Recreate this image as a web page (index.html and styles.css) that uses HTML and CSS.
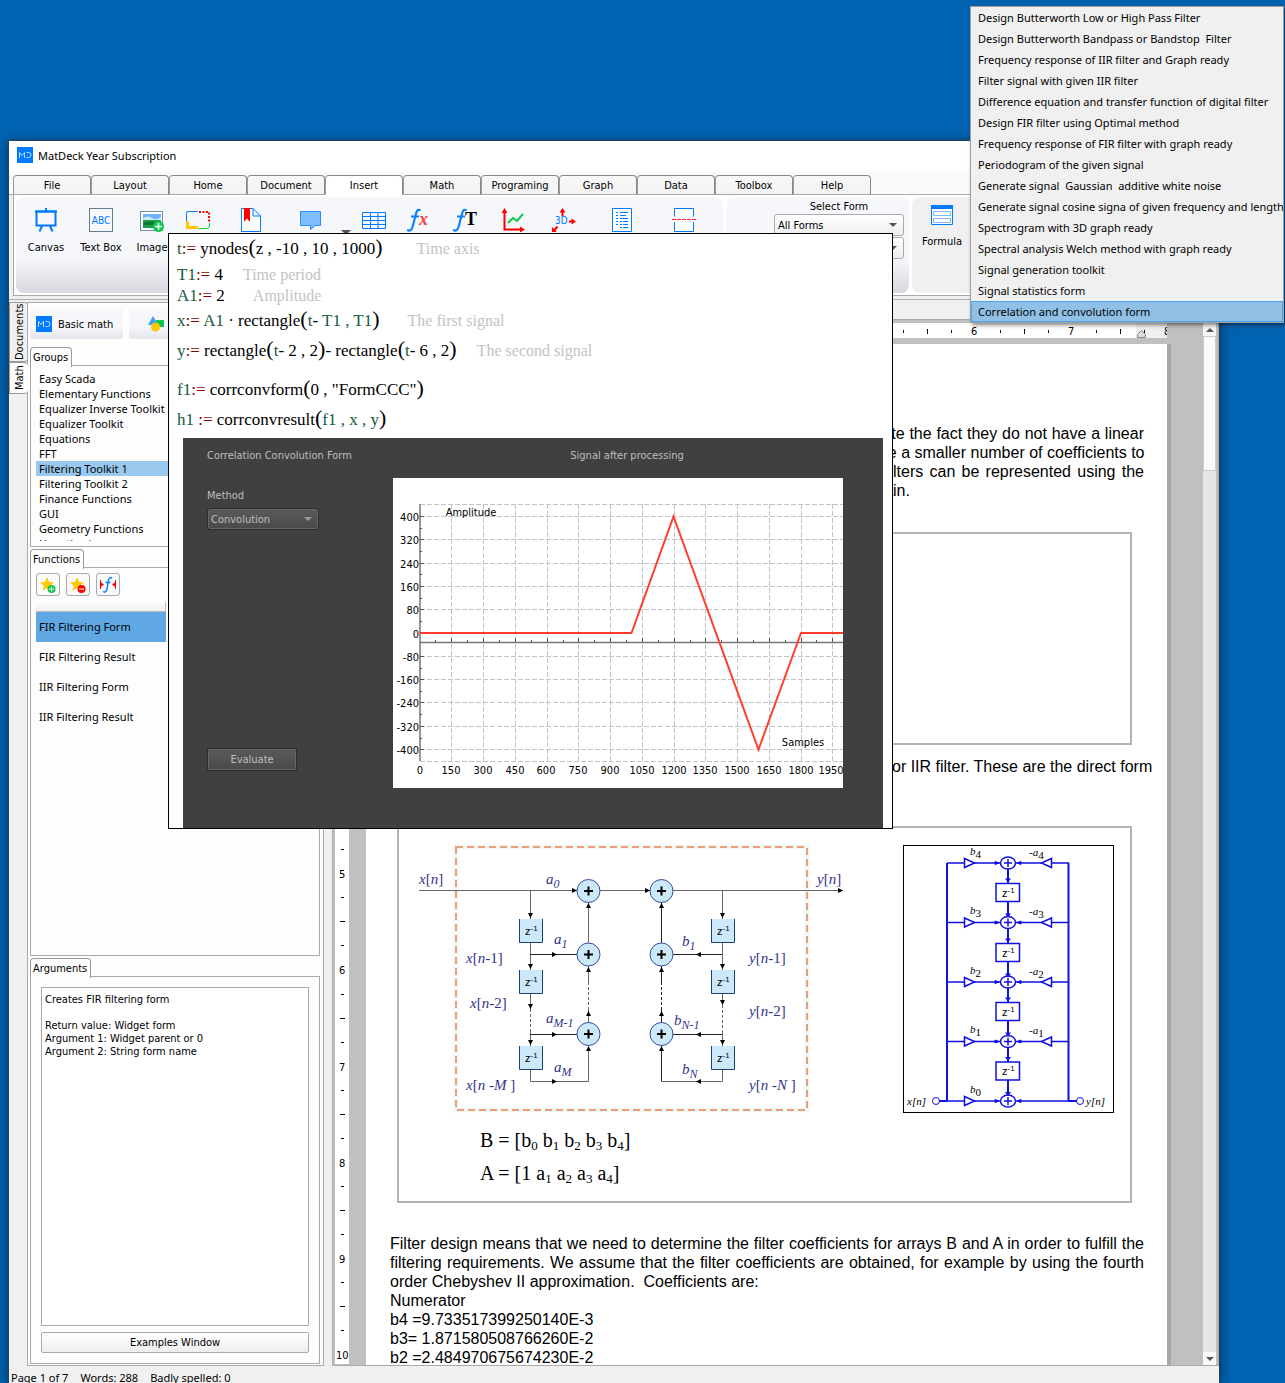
FILE: index.html
```html
<!DOCTYPE html>
<html lang="en">
<head>
<meta charset="utf-8">
<meta name="viewport" content="width=device-width, initial-scale=1">
<title>MatDeck Year Subscription</title>
<link rel="stylesheet" href="styles.css">
</head>
<body>
<main class="app">
  <header class="titlebar">
    <svg class="logo" viewBox="0 0 16 16"><rect width="16" height="16" fill="#007bff"/><path d="M2.500 11V5.500L5 8.500 7.500 5.500V11M9.500 5.500h2q2.500 0 2.500 2.500t-2.500 2.500h-2" fill="none" stroke="#bfe0ff"/></svg>
    <h1>MatDeck Year Subscription</h1>
  </header>

  <nav class="tabs">
    <button>File</button><button>Layout</button><button>Home</button><button>Document</button><button class="active">Insert</button><button>Math</button><button>Programing</button><button>Graph</button><button>Data</button><button>Toolbox</button><button>Help</button>
  </nav>

  <section class="ribbon">
    <div class="group tools">
      <button class="tool w54"><svg viewBox="0 0 24 24"><path d="M12 0v4M2.500 3.500h19v14h-19zM8 18l-2.500 5.500M16 18l2.500 5.500" fill="none" stroke="#007bff" stroke-width="2"/><path d="M1 3.500h22" stroke="#007bff" stroke-width="2"/></svg>Canvas</button>
      <button class="tool w56"><svg viewBox="0 0 24 24"><rect x=".5" y=".5" width="23" height="23" fill="none" stroke="#5f7f8f"/><text x="12" y="16" text-anchor="middle" class="abc" fill="#007bff">ABC</text></svg>Text Box</button>
      <button class="tool w46"><svg viewBox="0 0 24 24"><rect x=".5" y="3.500" width="22" height="19" fill="#fff" stroke="#6f8f9f"/><path d="M3 6h18v6H3z" fill="#6cb4ff"/><path d="M3 10q5-3 9 0t9-1v4H3z" fill="#cfe8ff"/><path d="M3 12h18v8H3z" fill="#1f9e4a"/><path d="M3 15q8-3 18 0v2H3z" fill="#0c7a34"/><circle cx="18.500" cy="18.500" r="5.500" fill="#0dc94f"/><path d="M18.500 15v7M15 18.500h7" stroke="#fff" stroke-width="1.500"/></svg>Image</button>
      <button class="tool w46" aria-label="Frame"><svg viewBox="0 0 24 24"><path d="M.5 13V5q0-1.500 1.500-1.500h10" fill="none" stroke="#007bff"/><path d="M13 4h10v11" fill="none" stroke="red" stroke-width="2" stroke-dasharray="2 1.500"/><path d="M23.500 15v3q0 2.500-3 2.500h-8" fill="none" stroke="#0dc94f"/><path d="M0 13h3v5h9v3H0z" fill="#ffc800"/></svg></button>
      <button class="tool w60" aria-label="Bookmark"><svg viewBox="0 0 24 24"><path d="M2.500.5h11.500l7.500 7.500v15.500h-19zM14 .5V8h7.500" fill="#fff" stroke="#007bff"/><path d="M5 0h6v14l-3-3.500L5 14z" fill="red"/></svg></button>
      <button class="tool w60" aria-label="Comment"><svg viewBox="0 0 24 24"><path d="M1.500 3.500h20v14H16l-4.500 4v-4h-10z" fill="#80bdff" stroke="#2a8cff"/></svg></button>
      <i class="caret"></i>
      <button class="tool w46" aria-label="Table"><svg viewBox="0 0 24 24"><path d="M.5 4.500h23v16H.5zM.5 8.500h23M.5 12.500h23M.5 16.500h23M8.500 4.500v16M16 4.500v16" fill="none" stroke="#007bff"/></svg></button>
      <button class="tool w44" aria-label="Function"><svg viewBox="0 0 24 24"><path d="M13.500 2.500Q11 .5 9.500 4L5.500 19Q4 24 0 22M4 8.500h8" fill="none" stroke="#0a82ff" stroke-width="2.200"/><text x="12" y="17" class="fx" fill="#ff3b3b" font-style="italic">x</text></svg></button>
      <button class="tool w48" aria-label="Text function"><svg viewBox="0 0 24 24"><path d="M13.500 2.500Q11 .5 9.500 4L5.500 19Q4 24 0 22M4 8.500h8" fill="none" stroke="#0a82ff" stroke-width="2.200"/><text x="12" y="17" class="fx">T</text></svg></button>
      <button class="tool w48" aria-label="Graph"><svg viewBox="0 0 24 24"><path d="M3.500 2v19.500H22" fill="none" stroke="red" stroke-width="2"/><path d="M.5 5l3-5 3 5zM19 18.500l5 3-5 3z" fill="red"/><path d="M7 15l5-5 4 3 6-7" fill="none" stroke="#0dc94f" stroke-width="2"/></svg></button>
      <button class="tool w54" aria-label="3D graph"><svg viewBox="0 0 24 24"><path d="M10.500 3v5M17 13.500h4M5.500 18.500L2.500 22" stroke="red" stroke-width="2"/><path d="M7.500 4.500l3-4.500 3 4.500zM19.500 10.500l4.500 3-4.500 3zM0 19v5h5z" fill="red"/><text x="3" y="16" class="abc" fill="#007bff">3D</text></svg></button>
      <button class="tool w62" aria-label="List"><svg viewBox="0 0 24 24"><path d="M2.500.5h19v23h-19z" fill="#fff" stroke="#007bff"/><path d="M6 4.500h2M10 4.500h8M6 7.500h2M10 7.500h6M6 10.500h2M10 10.500h8M10 13.500h2M13 13.500h5M10 16.500h2M13 16.500h5M10 19.500h2M13 19.500h5M6 13.500h2M6 16.500h2" stroke="#007bff"/></svg></button>
      <button class="tool w62" aria-label="Page break"><svg viewBox="0 0 24 24"><path d="M2.500 8.500v-8h19v8M2.500 14v9.500h19V14" fill="#fff" stroke="#007bff"/><path d="M0 11.500h24" stroke="#ff2020" stroke-dasharray="4 1"/></svg></button>
    </div>
    <div class="group forms">
      <svg class="form-icon" viewBox="0 0 22 20"><use href="#form"/></svg>
      <div class="form-fields">
        <label for="form">Select Form</label>
        <span class="pick"><select id="form"><option>All Forms</option></select></span>
        <span class="pick"><select aria-label="Form item"><option></option></select></span>
      </div>
    </div>
    <div class="group formula">
      <button class="tool w60"><svg class="form-icon" viewBox="0 0 22 20"><g id="form"><path d="M.5.5h21v19H.5z" fill="#fff" stroke="#007bff"/><path d="M0 0h22v4H0z" fill="#007bff"/><path d="M2.500 6.500h17v4h-17zM2.500 13.500h17v4h-17z" fill="#fff" stroke="#80b8ff"/></g></svg>Formula</button>
    </div>
  </section>

  <div class="workspace">
    <nav class="side-tabs"><button>Documents</button><button class="active">Math</button></nav>
    <aside class="side">
      <div class="kits">
        <button><svg class="logo" viewBox="0 0 16 16"><rect width="16" height="16" fill="#007bff"/><path d="M2.500 11V5.500L5 8.500 7.500 5.500V11M9.500 5.500h2q2.500 0 2.500 2.500t-2.500 2.500h-2" fill="none" stroke="#bfe0ff"/></svg>Basic math</button>
        <button class="shapes" aria-label="Shapes"><svg class="logo" viewBox="0 0 16 16"><path d="M8 4h8v7H8z" fill="#0dc94f"/><path d="M0 9l5-9 5 9z" fill="#3f9bff"/><circle cx="7.500" cy="11" r="4.500" fill="#ffc800"/></svg></button>
      </div>
      <section class="pane">
        <h2>Groups</h2>
        <div class="box groups">
          <ul>
            <li>Easy Scada</li><li>Elementary Functions</li><li>Equalizer Inverse Toolkit</li><li>Equalizer Toolkit</li><li>Equations</li><li>FFT</li><li class="selected">Filtering Toolkit 1</li><li>Filtering Toolkit 2</li><li>Finance Functions</li><li>GUI</li><li>Geometry Functions</li><li>Hypothesis</li>
          </ul>
        </div>
      </section>
      <section class="pane grow">
        <h2>Functions</h2>
        <div class="box functions">
          <div class="actions">
            <button aria-label="Add favourite"><svg viewBox="0 0 18 18"><path d="M8 1l2 5 5 .5-4 3.500 1.500 5L8 12l-4.500 3L5 10 1 6.500 6 6z" fill="#ffc800"/><circle cx="12.500" cy="13" r="4" fill="#0dc94f"/><path d="M12.500 10.500v5M10 13h5" stroke="#fff"/></svg></button>
            <button aria-label="Remove favourite"><svg viewBox="0 0 18 18"><path d="M8 1l2 5 5 .5-4 3.500 1.500 5L8 12l-4.500 3L5 10 1 6.500 6 6z" fill="#ffc800"/><circle cx="12.500" cy="13" r="4" fill="red"/><path d="M10 13h5" stroke="#fff"/></svg></button>
            <button aria-label="Insert function"><svg viewBox="0 0 18 18"><path d="M1.500 4v9M16.500 4v9" stroke="red"/><path d="M1 5.500L5 8.500 1 11.500zM17 5.500l-4 3 4 3z" fill="red"/><path d="M13 2.500Q11 0 9.500 4L8 13Q7 17.500 4 15.500M6.500 6.500h5" fill="none" stroke="#0a82ff" stroke-width="1.500"/></svg></button>
          </div>
          <div class="list-head"></div>
          <ul>
            <li class="selected">FIR Filtering Form</li><li>FIR Filtering Result</li><li>IIR Filtering Form</li><li>IIR Filtering Result</li>
          </ul>
        </div>
      </section>
      <section class="pane">
        <h2>Arguments</h2>
        <div class="box arguments">
          <div class="help"><p>Creates FIR filtering form</p><p>Return value: Widget form<br>Argument 1: Widget parent or 0<br>Argument 2: String form name</p></div>
          <button>Examples Window</button>
        </div>
      </section>
    </aside>
    <div class="splitter"></div>

    <section class="editor">
      <div class="editor-bar"></div>
      <div class="view">
        <div class="sheet-area">
          <svg class="ruler-top" viewBox="335 323 832 15"><path d="M335 323h832v15H335z" fill="#fff"/><path d="M1136 323h31v15h-31z" fill="#f0f0f0"/><path d="M903.500 330v3M951.500 330v3M1000.500 330v3M1048.500 330v3M1096.500 330v3M1144.500 330v3M927.500 329v5M1024.500 329v5M1120.500 329v5" stroke="#000"/><text x="971" y="335">6</text><text x="1068" y="335">7</text><text x="1164" y="335">8</text><path d="M1137.500 337.500v-3l4-4 4 4v3z" fill="#ddd" stroke="#888"/></svg>
          <div class="sheet-row">
            <svg class="ruler-left" viewBox="335 344 14 1020"><path d="M335 344h14v1020h-14z" fill="#fff"/><path d="M341 849.500h3M341 897.500h3M341 945.500h3M341 994.500h3M341 1042.500h3M341 1090.500h3M341 1138.500h3M341 1186.500h3M341 1234.500h3M341 1282.500h3M341 1330.500h3M340 921.500h5M340 1018.500h5M340 1114.500h5M340 1210.500h5M340 1306.500h5" stroke="#000"/><text x="339" y="878">5</text><text x="339" y="974">6</text><text x="339" y="1071">7</text><text x="339" y="1167">8</text><text x="339" y="1263">9</text><text x="336" y="1359">10</text></svg>
            <article class="sheet">
              <div class="intro">
                <p>despite the fact they do not have a linear</p>
                <p class="in-s">have a smaller number of coefficients to</p>
                <p class="in-l">filters can be represented using the</p>
                <p class="last">domain.</p>
              </div>
              <div class="frame empty"></div>
              <p class="forms-note">or IIR filter. These are the direct form</p>
              <div class="frame">
                <div class="figures">
                  <svg class="fig-a" viewBox="418 842 430 272">
                    <defs>
                      <g id="sum"><circle r="11.500" fill="#cbe9f9" stroke="#3a4a9c"/><path d="M-4.500 0h9M0-4.500v9" stroke="#000" stroke-width="2"/></g>
                      <g id="delay"><rect x="-12" width="24" height="24" fill="#cbe9f9"/><path d="M-11.500 0v23.500h23V0" fill="none" stroke="#1f3f6f"/><text x="-6" y="16">z<tspan class="tiny" dy="-4">-1</tspan></text></g>
                      <path id="ar" d="M0 0l-5-2.500v5z"/>
                    </defs>
                    <rect x="456" y="847" width="351" height="263" fill="none" stroke="#f1f8f4" stroke-width="5"/>
                    <rect x="456" y="847" width="351" height="263" fill="none" stroke="#e8a07a" stroke-width="2" stroke-dasharray="7 4"/>
                    <path d="M419 890.500h424M530.500 890v156M722.500 890v156M530.500 1070v11.500h58V966M588.500 954v-52M722.500 1070v11.500h-61V902" fill="none" stroke="#666"/>
                    <path d="M530 954.500h47M530 1034.500h47M673 954.500h49M673 1034.500h49M661.500 1081v-179" stroke="#222"/>
                    <path d="M530.500 1012v20M588.500 985v25M661.500 985v25M722.500 1008v22" stroke="#fff" stroke-width="2" stroke-dasharray="2 3"/>
                    <use href="#sum" x="588.500" y="891"/><use href="#sum" x="588.500" y="954.500"/><use href="#sum" x="588.500" y="1034"/>
                    <use href="#sum" x="661.500" y="891"/><use href="#sum" x="661.500" y="954.500"/><use href="#sum" x="661.500" y="1034"/>
                    <use href="#delay" x="531" y="919"/><use href="#delay" x="531" y="970"/><use href="#delay" x="531" y="1046"/>
                    <use href="#delay" x="723" y="919"/><use href="#delay" x="723" y="970"/><use href="#delay" x="723" y="1046"/>
                    <use href="#ar" x="577" y="890.500"/><use href="#ar" x="650" y="890.500"/><use href="#ar" x="843" y="890.500"/><use href="#ar" x="557" y="954.500"/><use href="#ar" x="557" y="1034.500"/><use href="#ar" x="557" y="1081.500"/>
                    <path d="M696 954.500l5-2.500v5zM696 1034.500l5-2.500v5zM696 1081.500l5-2.500v5zM528 913h5l-2.500 5zM528 964h5l-2.500 5zM528 1004h5l-2.500 5zM528 1040h5l-2.500 5zM720 913h5l-2.500 5zM720 964h5l-2.500 5zM720 1000h5l-2.500 5zM720 1040h5l-2.500 5zM586 908h5l-2.500-5zM586 972h5l-2.500-5zM586 1016h5l-2.500-5zM586 1051h5l-2.500-5zM659 908h5l-2.500-5zM659 972h5l-2.500-5zM659 1016h5l-2.500-5zM659 1051h5l-2.500-5z"/>
                    <g class="sym"><text x="419" y="884">x<tspan class="up">[</tspan>n<tspan class="up">]</tspan></text><text x="546" y="884">a<tspan dy="4" class="sub">0</tspan></text><text x="817" y="884">y<tspan class="up">[</tspan>n<tspan class="up">]</tspan></text><text x="466" y="963">x<tspan class="up">[</tspan>n<tspan class="up">-1]</tspan></text><text x="554" y="944">a<tspan dy="4" class="sub">1</tspan></text><text x="470" y="1008">x<tspan class="up">[</tspan>n<tspan class="up">-2]</tspan></text><text x="546" y="1023">a<tspan dy="4" class="sub">M-1</tspan></text><text x="554" y="1072">a<tspan dy="4" class="sub">M</tspan></text><text x="466" y="1090">x<tspan class="up">[</tspan>n -M <tspan class="up">]</tspan></text><text x="682" y="946">b<tspan dy="4" class="sub">1</tspan></text><text x="674" y="1025">b<tspan dy="4" class="sub">N-1</tspan></text><text x="682" y="1074">b<tspan dy="4" class="sub">N</tspan></text><text x="749" y="963">y<tspan class="up">[</tspan>n<tspan class="up">-1]</tspan></text><text x="749" y="1016">y<tspan class="up">[</tspan>n<tspan class="up">-2]</tspan></text><text x="749" y="1090">y<tspan class="up">[</tspan>n -N <tspan class="up">]</tspan></text></g>
                  </svg>
                  <svg class="fig-b" viewBox="903 845 211 268">
                    <defs>
                      <g id="stage" fill="#fff" stroke="#1010e0"><path d="M947 0h122" stroke-width="1.500"/><path d="M964.500-4.500v9l10-4.500z" stroke-width="1.500"/><path d="M995-1.500l4 1.500-4 1.500z" fill="#1010e0"/><ellipse cx="1008" cy="0" rx="7.500" ry="6" stroke-width="1.500"/><path d="M1004 0h8M1008-4v8" stroke-width="1.500"/></g>
                      <path id="tap" d="M1051.500-4.500v9l-10-4.500z" fill="#fff" stroke="#1010e0" stroke-width="1.500"/>
                      <path id="tip" d="M1021-1.500l-4 1.500 4 1.500z" fill="#1010e0" stroke="#1010e0"/>
                      <g id="zb"><path d="M996 0h23.500v18H996z" fill="#fff" stroke="#1010e0" stroke-width="1.500"/><path d="M1005-5h6l-3 4zM1005 30h6l-3 4z" fill="#1010e0"/><text x="1002" y="13">z<tspan class="tiny" dy="-4">-1</tspan></text></g>
                    </defs>
                    <rect x="903.500" y="845.500" width="210" height="267" fill="#fff" stroke="#000"/>
                    <path d="M1008 863v238M947 863v238M1068.500 863v238M939 1101h8M1068 1101h9" stroke="#1010e0" stroke-width="2"/>
                    <use href="#stage" y="863"/><use href="#stage" y="922.500"/><use href="#stage" y="982"/><use href="#stage" y="1041.500"/><use href="#stage" y="1101"/>
                    <use href="#tap" y="863"/><use href="#tap" y="922.500"/><use href="#tap" y="982"/><use href="#tap" y="1041.500"/>
                    <use href="#tip" y="863"/><use href="#tip" y="922.500"/><use href="#tip" y="982"/><use href="#tip" y="1041.500"/><use href="#tip" y="1101"/>
                    <use href="#zb" y="883.500"/><use href="#zb" y="943.500"/><use href="#zb" y="1002.500"/><use href="#zb" y="1062"/>
                    <circle cx="936" cy="1101" r="3.500" fill="#fff" stroke="#1010e0"/><circle cx="1080" cy="1101" r="3.500" fill="#fff" stroke="#1010e0"/>
                    <g class="sym2"><text x="970" y="855">b<tspan dy="3">4</tspan></text><text x="970" y="914">b<tspan dy="3">3</tspan></text><text x="970" y="974">b<tspan dy="3">2</tspan></text><text x="970" y="1033">b<tspan dy="3">1</tspan></text><text x="970" y="1093">b<tspan dy="3">0</tspan></text><text x="1029" y="856">-a<tspan dy="3">4</tspan></text><text x="1029" y="915">-a<tspan dy="3">3</tspan></text><text x="1029" y="975">-a<tspan dy="3">2</tspan></text><text x="1029" y="1034">-a<tspan dy="3">1</tspan></text><text x="907" y="1105">x[n]</text><text x="1086" y="1105">y[n]</text></g>
                  </svg>
                </div>
                <div class="coeffs">
                  <p>B = [b<sub>0</sub> b<sub>1</sub> b<sub>2</sub> b<sub>3</sub> b<sub>4</sub>]</p>
                  <p>A = [1 a<sub>1</sub> a<sub>2</sub> a<sub>3</sub> a<sub>4</sub>]</p>
                </div>
              </div>
              <p class="body">Filter design means that we need to determine the filter coefficients for arrays B and A in order to fulfill the filtering requirements. We assume that the filter coefficients are obtained, for example by using the fourth order Chebyshev II approximation.&nbsp; Coefficients are:</p>
              <p>Numerator<br>b4 =9.733517399250140E-3<br>b3= 1.871580508766260E-2<br>b2 =2.484970675674230E-2</p>
            </article>
          </div>
        </div>
        <div class="scroll"><i class="up"></i><b></b><i class="down"></i></div>
      </div>
    </section>
  </div>
  <footer class="status"><span>Page 1 of 7</span><span>Words: 288</span><span>Badly spelled: 0</span></footer>
</main>

<section class="dialog">
  <div class="code">
    <p><var>t</var><i>:=</i> ynodes<b>(</b>z , -10 , 10 , 1000<b>)</b><em class="far">Time axis</em></p>
    <p class="short"><var>T1</var><i>:=</i> 4<em>Time period</em></p>
    <p class="short"><var>A1</var><i>:=</i> 2<em class="mid">Amplitude</em></p>
    <p><var>x</var><i>:=</i> <var>A1</var> · rectangle<b>(</b><var>t</var>- <var>T1 , T1</var><b>)</b><em class="mid">The first signal</em></p>
    <p><var>y</var><i>:=</i> rectangle<b>(</b><var>t</var>- 2 , 2<b>)</b>- rectangle<b>(</b><var>t</var>- 6 , 2<b>)</b><em>The second signal</em></p>
    <p class="apart"><var>f1</var><i>:=</i> corrconvform<b>(</b>0 , "FormCCC"<b>)</b></p>
    <p><var>h1</var> <i>:=</i> corrconvresult<b>(</b><var>f1 , x , y</var><b>)</b></p>
  </div>
  <form class="conv">
    <div class="controls">
      <h2>Correlation Convolution Form</h2>
      <label for="method">Method</label>
      <span class="pick dark"><select id="method"><option>Convolution</option></select></span>
      <button type="button">Evaluate</button>
    </div>
    <div class="result">
      <h2>Signal after processing</h2>
      <svg class="chart" viewBox="0 0 450 310">
        <rect width="450" height="310" fill="#fff"/>
        <path d="M27 26.500h423M27 38.500h423M27 61.500h423M27 85.500h423M27 108.500h423M27 131.500h423M27 178.500h423M27 201.500h423M27 224.500h423M27 248.500h423M27 271.500h423M27 283.500h423" stroke="#c4c4c4" stroke-dasharray="5 2"/>
        <path d="M58.500 26v257M90.500 26v257M122.500 26v257M154.500 26v257M185.500 26v257M217.500 26v257M249.500 26v257M281.500 26v257M312.500 26v257M344.500 26v257M376.500 26v257M408.500 26v257M439.500 26v257" stroke="#c4c4c4" stroke-dasharray="5 2"/>
        <path d="M27 26v257M27 164.500h423" stroke="#777" stroke-width="1.500"/>
        <path d="M27 38.500h4M27 61.500h4M27 85.500h4M27 108.500h4M27 131.500h4M27 178.500h4M27 201.500h4M27 224.500h4M27 248.500h4M27 271.500h4M27 50.500h2M27 73.500h2M27 96.500h2M27 120.500h2M27 143.500h2M27 190.500h2M27 213.500h2M27 236.500h2M27 260.500h2M58.500 160v4M90.500 160v4M122.500 160v4M154.500 160v4M185.500 160v4M217.500 160v4M249.500 160v4M281.500 160v4M312.500 160v4M344.500 160v4M376.500 160v4M408.500 160v4M439.500 160v4M42.500 162v2M74.500 162v2M106.500 162v2M138.500 162v2M170.500 162v2M201.500 162v2M233.500 162v2M265.500 162v2M297.500 162v2M328.500 162v2M360.500 162v2M392.500 162v2M423.500 162v2" stroke="#555"/>
        <path d="M27 155h211.500l42-116.500 85 233L408 155h42" fill="none" stroke="#ff3e2e" stroke-width="2"/>
        <g text-anchor="end"><text x="26" y="43">400</text><text x="26" y="66">320</text><text x="26" y="90">240</text><text x="26" y="113">160</text><text x="26" y="136">80</text><text x="26" y="160">0</text><text x="26" y="183">-80</text><text x="26" y="206">-160</text><text x="26" y="229">-240</text><text x="26" y="253">-320</text><text x="26" y="276">-400</text></g>
        <g text-anchor="middle"><text x="27" y="296">0</text><text x="58" y="296">150</text><text x="90" y="296">300</text><text x="122" y="296">450</text><text x="153" y="296">600</text><text x="185" y="296">750</text><text x="217" y="296">900</text><text x="249" y="296">1050</text><text x="281" y="296">1200</text><text x="312" y="296">1350</text><text x="344" y="296">1500</text><text x="376" y="296">1650</text><text x="408" y="296">1800</text><text x="438" y="296">1950</text><text x="78" y="38">Amplitude</text><text x="410" y="268">Samples</text></g>
      </svg>
    </div>
  </form>
</section>

<ul class="menu">
  <li>Design Butterworth Low or High Pass Filter</li>
  <li>Design Butterworth Bandpass or Bandstop&nbsp; Filter</li>
  <li>Frequency response of IIR filter and Graph ready</li>
  <li>Filter signal with given IIR filter</li>
  <li>Difference equation and transfer function of digital filter</li>
  <li>Design FIR filter using Optimal method</li>
  <li>Frequency response of FIR filter with graph ready</li>
  <li>Periodogram of the given signal</li>
  <li>Generate signal&nbsp; Gaussian&nbsp; additive white noise</li>
  <li>Generate signal cosine signa of given frequency and length</li>
  <li>Spectrogram with 3D graph ready</li>
  <li>Spectral analysis Welch method with graph ready</li>
  <li>Signal generation toolkit</li>
  <li>Signal statistics form</li>
  <li class="selected">Correlation and convolution form</li>
</ul>
</body>
</html>
```

FILE: styles.css
```css
* { box-sizing: border-box; }
body {
  margin: 0;
  height: 100vh;
  overflow: hidden;
  position: relative;
  background: #0063b1;
  color: #000;
  font: 11px/13px "DejaVu Sans Condensed", "Noto Sans", sans-serif;
}
h1, h2, p, ul { margin: 0; padding: 0; font-size: inherit; font-weight: normal; }
ul { list-style: none; }
ul, h1, .status { font-family: "Noto Sans", "Open Sans", sans-serif; }
button, select { font: inherit; color: inherit; padding: 0; margin: 0; border: 0; background: none; }
svg { display: block; flex: none; }
svg text { font-size: 11px; }
.logo { width: 16px; height: 16px; }

/* application window */
.app {
  display: flex;
  flex-direction: column;
  height: calc(100vh - 141px);
  margin: 141px 66px 0 9px;
  background: #f0f0f0;
  box-shadow: 0 0 0 1px #24405c, 0 2px 12px rgba(0, 0, 0, .6);
}
.titlebar { display: flex; align-items: center; gap: 5px; height: 30px; padding: 0 0 2px 8px; background: #fff; }
.tabs { display: flex; height: 24px; padding: 4px 0 0 4px; background: #fafafa; box-shadow: inset 0 -1px #a9a9a9; }
.tabs button { width: 78px; border: 1px solid #888; border-bottom-color: #a9a9a9; border-left-color: #999; border-radius: 4px 4px 0 0; background: linear-gradient(#f8f8f8, #f2f2f2); }
.tabs .active { background: #fff; border-bottom-color: #fff; }

.ribbon { display: flex; gap: 3px; height: 101px; margin-left: 4px; padding: 2px 0 2px 2px; overflow: hidden; background: #fff; border: 1px solid #a9a9a9; border-width: 0 0 1px 1px; }
.group { flex: none; border-radius: 8px; background: linear-gradient(#f5f7fb 65%, #d8d8e0); }
.tools { display: flex; width: 707px; padding: 11px 0 0 3px; }
.tool { display: flex; flex: none; flex-direction: column; align-items: center; gap: 9px; height: 60px; white-space: nowrap; }
.tool svg { width: 24px; height: 24px; }
svg .fx { font-family: "Liberation Serif", serif; font-weight: bold; font-size: 18px; }
svg .abc { font-size: 10px; }
.w44 { width: 44px; } .w46 { width: 46px; } .w48 { width: 48px; }
.w54 { width: 54px; } .w56 { width: 56px; } .w60 { width: 60px; } .w62 { width: 62px; }
.caret { width: 10px; height: 0; margin-top: 22px; border: 4px solid transparent; border-top-color: #555; }
.forms { display: flex; width: 183px; padding: 3px 5px 0 15px; gap: 11px; }
.forms .form-icon, .formula .form-icon { width: 22px; height: 20px; }
.forms .form-icon { margin-top: 5px; }
.form-fields { display: flex; flex: 1; flex-direction: column; gap: 1px; text-align: center; }
.pick { display: block; position: relative; height: 22px; }
.pick select { width: 100%; height: 100%; padding-left: 3px; appearance: none; border: 1px solid #aaa; border-radius: 3px; background: linear-gradient(#fff, #eee); }
.pick::after { content: ""; position: absolute; right: 7px; top: 9px; border: 4px solid transparent; border-top-color: #555; }
.formula { width: 100px; padding-top: 8px; background: #f0f0f0; }
.formula .tool { gap: 10px; }

.workspace { display: flex; flex: 1; min-height: 0; margin-top: 3px; padding-top: 2px; border-top: 1px solid #b0b0b0; }
.side-tabs { width: 18px; }
.side-tabs button { display: block; width: 19px; height: 60px; writing-mode: vertical-rl; transform: rotate(180deg); border: 1px solid #999; border-left: 0; border-radius: 4px 0 0 4px; }
.side-tabs .active { height: 32px; background: #fdfdfd; }
.side { display: flex; flex-direction: column; gap: 2px; width: 297px; padding: 6px 3px 1px 2px; background: #fdfdfd; border: 1px solid #aaa; }
.kits { display: flex; gap: 6px; height: 36px; }
.kits button { display: flex; align-items: center; gap: 6px; width: 93px; height: 30px; padding-left: 6px; border-radius: 3px; background: linear-gradient(#f5f7fb 60%, #e4e4ea); }
.kits .shapes { width: 160px; padding-left: 19px; }
.pane { display: flex; flex-direction: column; }
.pane h2 { align-self: flex-start; height: 20px; margin-bottom: -2px; padding: 3px 3px 0 2px; line-height: 14px; border: 1px solid #999; border-bottom: 0; border-radius: 4px 4px 0 0; background: #fdfdfd; z-index: 1; }
.box { border: 1px solid #aaa; background: #fdfdfd; }
.groups { height: 182px; padding: 5px 0 4px 5px; }
.groups ul { height: 170px; overflow: hidden; line-height: 15px; }
.groups li { padding-left: 3px; }
.groups .selected { background: #99c9ef; }
.grow, .grow .box { flex: 1; }
.functions { padding: 5px; }
.actions { display: flex; gap: 6px; }
.actions button { display: grid; place-items: center; width: 24px; height: 23px; border: 1px solid #aaa; border-radius: 3px; background: #fafafa; }
.actions svg { width: 18px; height: 18px; }
.list-head { width: 130px; height: 10px; margin-top: 6px; border: 1px solid #bbb; border-width: 0 1px 1px 0; background: linear-gradient(#fdfdfd, #eee); }
.functions li { width: 130px; padding-left: 3px; line-height: 30px; }
.functions .selected { background: #5fa8e3; }
.arguments { display: flex; flex-direction: column; gap: 6px; height: 388px; padding: 10px; }
.help { flex: 1; padding: 5px 3px; border: 1px solid #aaa; background: #fff; }
.help p + p { margin-top: 13px; }
.arguments button { height: 21px; border: 1px solid #aaa; border-radius: 2px; background: linear-gradient(#fff, #eee); }
.splitter { width: 8px; }

.editor { display: flex; flex: 1; flex-direction: column; min-width: 0; border: 1px solid #aaa; border-top: 0; }
.editor-bar { height: 18px; border-bottom: 1px solid #aaa; }
.view { display: flex; flex: 1; min-height: 0; padding: 3px 2px 0 2px; background: #c0c0c0; }
.sheet-area { display: flex; flex: 1; flex-direction: column; gap: 6px; min-width: 0; overflow: hidden; }
.ruler-top { width: 832px; height: 15px; }
.sheet-row { display: flex; flex: 1; gap: 17px; min-height: 0; }
.ruler-left { width: 14px; height: 1020px; }
.sheet { width: 801px; padding: 80px 23px 0 24px; overflow: hidden; background: #fff; box-shadow: 4px 0 #a8a8a8; font: 16px/19px "Liberation Sans", Arial, sans-serif; }
.sheet-row .sheet { flex: none; }
.intro { padding-left: 463px; text-align-last: justify; white-space: nowrap; }
.intro .in-s { padding-left: 9px; }
.intro .in-l { padding-left: 32px; }
.intro .last { text-align-last: left; }
.frame { margin: 0 12px 31px 7px; border: 2px solid #b4b4b4; }
.frame.empty { height: 213px; margin-top: 32px; margin-bottom: 12px; }
.forms-note { margin-bottom: 50px; padding-left: 502px; white-space: nowrap; }
.figures { display: flex; gap: 55px; padding: 14px 0 0 19px; align-items: flex-start; }
.fig-a { width: 430px; height: 272px; }
.fig-b { width: 211px; height: 268px; margin-top: 3px; }
svg .tiny { font-size: 8px; }
.sym text { font-family: "Liberation Serif", serif; font-size: 15px; font-style: italic; fill: #33338c; }
.sym .sub { font-size: 12px; }
.sym .up { font-style: normal; }
.sym2 text { font-family: "Liberation Serif", serif; font-size: 11px; font-style: italic; }
.sym2 tspan { font-style: normal; }
.coeffs { padding: 10px 0 11px 81px; font: 20px/33px "Liberation Serif", serif; }
.coeffs sub { font-size: 13px; line-height: 0; vertical-align: -3px; }
.body { text-align: justify; }

.scroll { display: flex; flex-direction: column; width: 13px; background: #e6e6e6; }
.scroll i { display: grid; place-items: center; height: 13px; background: #f8f8f8; }
.scroll b { height: 135px; border: 1px solid #ccc; background: #fafafa; }
.scroll i::before { content: ""; border: 4px solid transparent; }
.scroll .up::before { border-top: 0; border-bottom-color: #555; }
.scroll .down { margin-top: auto; }
.scroll .down::before { border-bottom: 0; border-top-color: #555; }

.status { display: flex; gap: 12px; height: 17px; padding: 4px 2px 0; line-height: 16px; }

/* floating form window */
.dialog { position: absolute; left: 168px; top: 233px; width: 725px; padding: 0 9px 0 14px; border: 1px solid #000; background: #fff; }
.code { height: 204px; margin-left: -6px; font: 17px/30px "Liberation Serif", serif; white-space: nowrap; }
.code p { height: 30px; }
.code p.short { height: 21px; line-height: 21px; }
.code p.apart { margin-top: 9px; }
.code var { font-style: normal; color: #145a3c; }
.code i { font-style: normal; color: #8b0000; }
.code b { font-size: 22px; line-height: 0; font-weight: normal; }
.code em { margin-left: 20px; font-size: 16px; font-style: normal; color: #c3c3c3; }
.code .mid { margin-left: 28px; }
.code .far { margin-left: 34px; }
.conv { display: flex; height: 390px; padding: 11px 40px 40px 24px; background: #404040; color: #bebebe; }
.controls { display: flex; flex-direction: column; align-items: flex-start; width: 186px; }
.controls label { margin: 27px 0 6px; }
.dark { width: 112px; }
.dark select { border-color: #2c2c2c; background: linear-gradient(#5a5a5a, #4a4a4a); box-shadow: inset 0 0 0 1px #666; }
.dark::after { border-top-color: #999; }
.controls button { width: 90px; height: 23px; margin-top: auto; margin-bottom: 17px; border: 1px solid #2c2c2c; border-radius: 2px; background: linear-gradient(#5a5a5a, #4a4a4a); box-shadow: inset 0 0 0 1px #666; }
.result { flex: 1; text-align: center; }
.result h2 { margin: 0 0 16px 18px; }
.chart { width: 450px; height: 310px; }

/* drop-down list of forms */
.menu { position: absolute; right: 1px; top: 6px; width: 314px; overflow: hidden; border: 1px solid #a0a0a0; background: #f0f0f0; box-shadow: 2px 2px 4px rgba(0, 0, 0, .5); white-space: nowrap; }
.menu li { height: 21px; padding-left: 7px; line-height: 21px; }
.menu .selected { background: #90c0e6; box-shadow: inset 0 0 0 1px #4aa5ee; }
```
